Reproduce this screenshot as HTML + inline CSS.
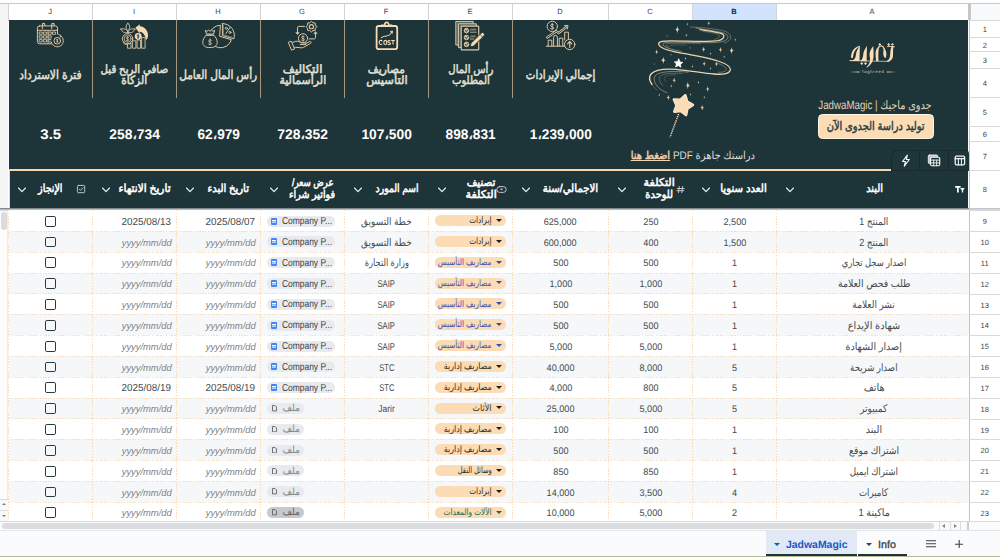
<!DOCTYPE html>
<html lang="ar">
<head>
<meta charset="utf-8">
<title>JadwaMagic</title>
<style>
*{box-sizing:border-box;margin:0;padding:0}
html,body{width:1000px;height:557px;overflow:hidden;background:#fff}
body{font-family:"Liberation Sans",sans-serif;color:#3c4043;position:relative;text-rendering:geometricPrecision}
#app{position:absolute;left:0;top:0;width:1000px;height:557px;overflow:hidden;background:#fff}
.abs{position:absolute}
.ch{position:absolute;top:3.5px;height:16.8px;background:#fff;border-left:1px solid #d4d4d4;font-size:7.5px;color:#444;text-align:center;line-height:15.6px}
.ch.sel{background:#d3e3fd;font-weight:bold;color:#0a2250}
.rh{position:absolute;left:968.5px;width:31.5px;background:#fff;border-top:1px solid #d9d9d9;border-left:1px solid #c4c4c4;font-size:7.5px;color:#444;text-align:center}
.rh span{position:absolute;left:0;right:0;top:50%;margin-top:-4px;line-height:9px}
#band{position:absolute;left:8.5px;top:20.2px;width:959.8px;height:187.5px;background:#1d3439}
.vdiv{position:absolute;top:20.2px;width:1px;height:77.4px;background:#a8977c}
.kl{position:absolute;top:55.3px;height:40px;display:flex;align-items:center;justify-content:center;text-align:center;direction:rtl;font-size:12.5px;line-height:11.6px;font-weight:normal;-webkit-text-stroke:.5px #e3e1d8;color:#e3e1d8;white-space:nowrap}
.kl.two{font-size:11.6px}
.kv{position:absolute;top:125px;height:18px;text-align:center;font-size:14px;line-height:18px;font-weight:bold;color:#fff;direction:ltr;unicode-bidi:bidi-override}
.hd{position:absolute;top:171px;height:37px;display:flex;align-items:center;justify-content:center;text-align:center;direction:rtl;font-size:11.2px;line-height:10.8px;font-weight:normal;-webkit-text-stroke:.55px #fff;color:#fff;white-space:nowrap}
.hd.two{font-size:10.8px;line-height:11.3px}
.chev{position:absolute;top:187.2px;width:8px;height:6px}
.cell{position:absolute;height:12px;line-height:12px;text-align:center;font-size:10.4px;color:#434a4e;white-space:nowrap;direction:rtl}
.cell.ltr{direction:ltr;font-size:9.5px}
.cell.lat{direction:ltr;font-size:9.8px}
.cell.dt{direction:ltr;text-align:right;padding-right:5.2px;font-size:10.2px}
.ph{font-style:italic;color:#7d8388;font-size:9.5px}
.rowbg{position:absolute;left:8.5px;width:960px}
.hl{position:absolute;left:8.5px;width:960px;height:1px;background:repeating-linear-gradient(90deg,#fbdcba 0 1.4px,transparent 1.4px 2.8px)}
.vl{position:absolute;top:210.3px;width:1px;height:311px;background:repeating-linear-gradient(180deg,#fbdcba 0 1.4px,transparent 1.4px 2.8px)}
.chip{position:absolute;height:11px;border-radius:5.5px;background:#fbdcb4;direction:rtl;font-size:9px;line-height:11px;white-space:nowrap;color:#2a2a2a;text-align:right;padding-right:14.6px}
.chip i{position:absolute;right:4.5px;top:3.8px;width:0;height:0;border-left:3.2px solid transparent;border-right:3.2px solid transparent;border-top:3.6px solid #1f1f1f}
.chip.b i{border-top-color:#2a4fc4}
.chip.g i{border-top-color:#1b6b53}
.chipt{position:absolute;height:12px;line-height:12px;direction:rtl;font-size:9px;white-space:nowrap;color:#2a2a2a;text-align:right;padding-right:14.6px}
.chipt.b{color:#3b4fb5}.chipt.g{color:#1b6b53}
.fc{position:absolute;height:11px;border-radius:5.5px;background:#e8eaed;font-size:10px;line-height:11px;white-space:nowrap;color:#3c4043;direction:ltr}
.fc b{position:absolute;left:4px;top:2px;width:6px;height:7px;background:#4285f4;border-radius:1px}
.fc b:before{content:"";position:absolute;left:1.3px;top:2px;width:3.4px;height:.8px;background:#fff;box-shadow:0 1.6px 0 #fff}
.fct{position:absolute;height:12px;line-height:12px;font-size:10px;white-space:nowrap;color:#3c4043;direction:ltr}
.ff{position:absolute;height:11px;border-radius:5.5px;background:#e8eaed;font-size:10px;line-height:11px;white-space:nowrap;color:#80868b;direction:rtl}
.ff.h{background:#c6c9cd;color:#5f6368}
.fft{position:absolute;height:12px;line-height:12px;font-size:10px;white-space:nowrap;color:#80868b;direction:rtl;text-align:right}
.fft.h{color:#5f6368}
.ff svg{position:absolute;left:5px;top:2.2px}
.cb{position:absolute;width:11.3px;height:10.8px;border:1.55px solid #243a3f;border-radius:1.8px;background:transparent}
</style>
</head>
<body>
<div id="app">
<div class="abs" style="left:0;top:0;width:1000px;height:3.2px;background:#fdfdfe"></div>
<div class="abs" style="left:0;top:3px;width:1000px;height:1px;background:#c9c9c9"></div>
<div class="abs" style="left:0;top:3.8px;width:8.3px;height:518px;background:linear-gradient(#f5f5f5 0,#f5f5f5 204px,#fdfdfd 207px)"></div>
<div class="abs" style="left:8px;top:3.8px;width:0.8px;height:17px;background:#bdbdbd"></div>
<div class="abs" style="left:7.4px;top:210.8px;width:.8px;height:288px;background:#ececec"></div>
<div class="ch" style="left:7.5px;width:84px">J</div>
<div class="ch" style="left:91.5px;width:84px">I</div>
<div class="ch" style="left:175.5px;width:84px">H</div>
<div class="ch" style="left:259.5px;width:84px">G</div>
<div class="ch" style="left:343.5px;width:84px">F</div>
<div class="ch" style="left:427.5px;width:84px">E</div>
<div class="ch" style="left:511.5px;width:96px">D</div>
<div class="ch" style="left:607.5px;width:84px">C</div>
<div class="ch sel" style="left:691.5px;width:84px">B</div>
<div class="ch" style="left:775.5px;width:192px">A</div>
<div class="abs" style="left:968.5px;top:3.8px;width:31.5px;height:16.5px;background:#f8f9fa"></div>
<div class="abs" style="left:968px;top:3.8px;width:3px;height:16.5px;background:#c6c6c6"></div>
<div class="rh" style="top:20.20px;height:16.70px"><span>1</span></div>
<div class="rh" style="top:36.90px;height:14.50px"><span>2</span></div>
<div class="rh" style="top:51.40px;height:16.70px"><span>3</span></div>
<div class="rh" style="top:68.10px;height:29.30px"><span>4</span></div>
<div class="rh" style="top:97.40px;height:28.10px"><span>5</span></div>
<div class="rh" style="top:125.50px;height:15.90px"><span>6</span></div>
<div class="rh" style="top:141.40px;height:28.70px"><span>7</span></div>
<div class="rh" style="top:170.10px;height:37.60px"><span>8</span></div>
<div class="rh" style="top:210.30px;height:20.83px"><span>9</span></div>
<div class="rh" style="top:231.13px;height:20.83px"><span>10</span></div>
<div class="rh" style="top:251.96px;height:20.83px"><span>11</span></div>
<div class="rh" style="top:272.79px;height:20.83px"><span>12</span></div>
<div class="rh" style="top:293.62px;height:20.83px"><span>13</span></div>
<div class="rh" style="top:314.45px;height:20.83px"><span>14</span></div>
<div class="rh" style="top:335.28px;height:20.83px"><span>15</span></div>
<div class="rh" style="top:356.11px;height:20.83px"><span>16</span></div>
<div class="rh" style="top:376.94px;height:20.83px"><span>17</span></div>
<div class="rh" style="top:397.77px;height:20.83px"><span>18</span></div>
<div class="rh" style="top:418.60px;height:20.83px"><span>19</span></div>
<div class="rh" style="top:439.43px;height:20.83px"><span>20</span></div>
<div class="rh" style="top:460.26px;height:20.83px"><span>21</span></div>
<div class="rh" style="top:481.09px;height:20.83px"><span>22</span></div>
<div class="rh" style="top:501.92px;height:20.83px"><span>23</span></div>
<div class="abs" style="left:968.5px;top:207.7px;width:31.5px;height:2.7px;background:linear-gradient(#bfc3c7,#d6d9dc)"></div>
<div id="band"></div>
<div class="vdiv" style="left:92.0px"></div>
<div class="vdiv" style="left:176.0px"></div>
<div class="vdiv" style="left:260.0px"></div>
<div class="vdiv" style="left:344.0px"></div>
<div class="vdiv" style="left:428.0px"></div>
<div class="vdiv" style="left:512.0px"></div>
<div class="kl" style="left:8.5px;width:84px"><div><div><span style="display:inline-block;transform:scaleX(0.854);">فترة الاسترداد</span></div></div></div>
<div class="kv" style="left:8.5px;width:84px"><span style="display:inline-block;transform:scaleX(1.074);unicode-bidi:bidi-override;direction:ltr;">3.5</span></div>
<div class="kl two" style="left:92.5px;width:84px"><div><div><span style="display:inline-block;transform:scaleX(0.881);">صافي الربح قبل</span></div><div><span style="display:inline-block;transform:scaleX(0.919);">الزكاة</span></div></div></div>
<div class="kv" style="left:92.5px;width:84px"><span style="display:inline-block;transform:scaleX(0.989);unicode-bidi:bidi-override;direction:ltr;">258<span style="font-weight:normal;-webkit-text-stroke:.4px #fff">،</span>734</span></div>
<div class="kl" style="left:176.5px;width:84px"><div><div><span style="display:inline-block;transform:scaleX(0.844);">رأس المال العامل</span></div></div></div>
<div class="kv" style="left:176.5px;width:84px"><span style="display:inline-block;transform:scaleX(0.978);unicode-bidi:bidi-override;direction:ltr;">62<span style="font-weight:normal;-webkit-text-stroke:.4px #fff">،</span>979</span></div>
<div class="kl two" style="left:260.5px;width:84px"><div><div><span style="display:inline-block;transform:scaleX(1.009);">التكاليف</span></div><div><span style="display:inline-block;transform:scaleX(0.944);">الرأسمالية</span></div></div></div>
<div class="kv" style="left:260.5px;width:84px"><span style="display:inline-block;transform:scaleX(0.989);unicode-bidi:bidi-override;direction:ltr;">728<span style="font-weight:normal;-webkit-text-stroke:.4px #fff">،</span>352</span></div>
<div class="kl two" style="left:344.5px;width:84px"><div><div><span style="display:inline-block;transform:scaleX(0.911);">مصاريف</span></div><div><span style="display:inline-block;transform:scaleX(0.991);">التأسيس</span></div></div></div>
<div class="kv" style="left:344.5px;width:84px"><span style="display:inline-block;transform:scaleX(0.985);unicode-bidi:bidi-override;direction:ltr;">107<span style="font-weight:normal;-webkit-text-stroke:.4px #fff">،</span>500</span></div>
<div class="kl two" style="left:428.5px;width:84px"><div><div><span style="display:inline-block;transform:scaleX(0.872);">رأس المال</span></div><div><span style="display:inline-block;transform:scaleX(0.865);">المطلوب</span></div></div></div>
<div class="kv" style="left:428.5px;width:84px"><span style="display:inline-block;transform:scaleX(0.976);unicode-bidi:bidi-override;direction:ltr;">898<span style="font-weight:normal;-webkit-text-stroke:.4px #fff">،</span>831</span></div>
<div class="kl" style="left:512.5px;width:96px"><div><div><span style="display:inline-block;transform:scaleX(0.816);">إجمالي الإيرادات</span></div></div></div>
<div class="kv" style="left:512.5px;width:96px"><span style="display:inline-block;transform:scaleX(0.975);unicode-bidi:bidi-override;direction:ltr;">1<span style="font-weight:normal;-webkit-text-stroke:.4px #fff">،</span>239<span style="font-weight:normal;-webkit-text-stroke:.4px #fff">،</span>000</span></div>
<svg class="abs" style="left:0;top:0" width="1000" height="220" viewBox="0 0 1000 220" fill="none" stroke-linecap="round" stroke-linejoin="round"><g stroke="#dcc8a6" stroke-width="1"><rect x="37.400" y="25.900" width="20.100" height="17.900" rx="2.200"/><path d="M37.600 30.300H57.300"/><path d="M42.300 28.400V24.600a1.250 1.250 0 0 1 2.500 0V25.400M51.700 28.400V24.600a1.250 1.250 0 0 1 2.500 0V25.400" stroke-width="1.050"/><rect x="39.5" y="32.0" width="2.700" height="2.300" stroke-width=".85"/><rect x="43.8" y="32.0" width="2.700" height="2.300" stroke-width=".85"/><rect x="48.6" y="32.0" width="2.700" height="2.300" stroke-width=".85"/><rect x="52.9" y="32.0" width="2.700" height="2.300" stroke-width=".85"/><rect x="39.5" y="35.8" width="2.700" height="2.300" stroke-width=".85"/><rect x="43.8" y="35.8" width="2.700" height="2.300" stroke-width=".85"/><rect x="48.6" y="35.8" width="2.700" height="2.300" stroke-width=".85"/><rect x="39.5" y="39.6" width="2.700" height="2.300" stroke-width=".85"/><rect x="43.8" y="39.6" width="2.700" height="2.300" stroke-width=".85"/><rect x="48.6" y="39.6" width="2.700" height="2.300" stroke-width=".85"/><path d="M47.900 31V43.400" stroke-width=".7"/><circle cx="57.300" cy="40.800" r="6.300" fill="#1d3439" stroke="none"/><circle cx="57.300" cy="40.800" r="3.300"/><path d="M57.300 39.300V42.300M56.500 39.900h1.300M56.800 41.800h1.300" stroke-width=".8"/><path d="M60.400 35.500A6.100 6.100 0 1 1 51.400 42.300" stroke-width=".95"/><path d="M58.700 34.600L60.700 35.400L60 37.300" stroke-width=".9"/></g><g stroke="#dcc8a6" stroke-width=".9"><path d="M127.900 23.300c2.500 2.300 2.500 5.100 0 7.200c-2.500-2.100-2.500-4.900 0-7.200Z"/><path d="M120.900 29.100c3.100-1 5.800.1 7 3.200c-3.100 1-5.800-.1-7-3.200Z"/><path d="M134.900 29.100c-3.100-1-5.800.1-7 3.200c3.100 1 5.800-.1 7-3.200Z"/><path d="M127.900 30.500V33.800"/><circle cx="127.600" cy="38.800" r="5.200"/><circle cx="127.600" cy="38.800" r="3.500" stroke-width=".8"/><path d="M128.700 37.500c-.9-.8-2.300-.4-2.300.5c0 1.300 2.400.6 2.400 1.900c0 .9-1.500 1.300-2.500.4M127.600 36.600v4.400" stroke-width=".7"/><path d="M123.600 41.800c-.8 1.500.8 2.700 4 2.700"/><path d="M127.400 47.800V43.600h3.600V47.800ZM132.400 47.800V40.800h3.500V47.800ZM137.100 47.800V40h3.500V47.800ZM141.600 47.800V37.600h3.500V47.800Z"/><circle cx="138.200" cy="36.300" r="3.400" fill="#f8dab5" stroke="none"/><path d="M139 35.200c-.7-.6-1.700-.3-1.700.4c0 1 1.800.5 1.800 1.500c0 .700-1.100 1-1.900.3M138.200 34.400v3.800" stroke="#1d3439" stroke-width=".7"/><path d="M135.400 27.800l4.300-3.600v2c4.800.3 8.300 4.300 8.300 9c0 2-.6 3.500-1.700 4.900c-1.100-4.600-3-8-6.600-8.700v2Z" fill="#f8dab5" stroke="none"/></g><g stroke="#dcc8a6" stroke-width="1"><path d="M220 25.200A11.300 11.300 0 1 0 231.400 39.700L220 36.400Z"/><path d="M222.400 23.600V35.600L233.900 38.800A11.800 11.800 0 0 0 222.400 23.600Z"/><path d="M223.500 25.200V34.800L232.400 37.300" stroke-width=".55" opacity=".8"/><path d="M226 33.400L230.200 27.200" stroke-width="1"/><circle cx="226.300" cy="28.300" r="1.050" stroke-width=".85"/><circle cx="230" cy="32.400" r="1.050" stroke-width=".85"/><path d="M206.400 35.200c-2.600 2.200-3.600 4.600-3.600 7.200c0 3.200 2.400 5.200 7.200 5.200s7.200-2 7.200-5.200c0-2.600-1-5-3.600-7.200Z" fill="#1d3439"/><path d="M206.200 33.600H213.800M206.200 35.200H213.800"/><path d="M206.400 33.400L205.300 30.400l1.800.9l1.400-1.200l1.500 1.200l1.500-1.200l1.400 1.200l1.800-.9L213.600 33.400" fill="#1d3439"/><path d="M211.500 40.300c-.9-.9-2.900-.6-2.900.7c0 1.600 3 .8 3 2.400c0 1.300-2.100 1.600-3.100.6M210 38.800v6.200" stroke-width=".8"/></g><g stroke="#dcc8a6" stroke-width="1"><path d="M316.70 26.70L315.28 28.31L315.15 30.45L313.01 30.58L311.40 32.00L309.79 30.58L307.65 30.45L307.52 28.31L306.10 26.70L307.52 25.09L307.65 22.95L309.79 22.82L311.40 21.40L313.01 22.82L315.15 22.95L315.28 25.09Z" stroke-linejoin="round" stroke-width="1"/><circle cx="311.400" cy="26.700" r="2.100" stroke-width="1.100"/><path d="M304.400 26.400H298.800a1.300 1.300 0 0 0-1.300 1.300V33"/><path d="M296 32.800L297.500 34.600L299 32.800Z" fill="#dcc8a6" stroke-width=".6"/><path d="M309.200 38.900H314.200a1.300 1.300 0 0 0 1.300-1.300V33.200"/><path d="M314 33.400L315.500 31.600L317 33.400Z" fill="#dcc8a6" stroke-width=".6"/><circle cx="303" cy="38.300" r="4.600"/><path d="M304.300 36.900c-.9-.9-2.700-.5-2.700.6c0 1.500 2.800.8 2.800 2.300c0 1.100-1.800 1.400-2.900.4M303 35.700v5.200" stroke-width=".85"/><path d="M288.600 42.200L291.300 41.200L294.600 49L291.900 50Z"/><path d="M292.600 42.600c2-1.400 4.400-1.800 6.600-.8l2.400 1h3.600c1.400 0 1.400 1.800 0 1.800h-5"/><path d="M305.600 43.600L309.600 41.600c1.200-.6 2.200.8 1.100 1.700L303.400 47.400c-.8.400-1.600.5-2.500.4L295.400 47.200l-1 .5"/></g><g stroke="#f8dab5"><rect x="376.600" y="26" width="20.600" height="23.200" rx="2.200" stroke-width="1.800"/><path d="M381.600 25.300h3c.3-3.800 3.900-3.800 4.200 0h3" stroke-width="1.700"/><circle cx="386.700" cy="24.200" r=".8" fill="#1d3439" stroke="none"/><path d="M381.200 37.800L384.200 36.200L386 36.400L387.600 35.400L389.200 35.400L392.200 31.600" stroke-width="1"/><path d="M390.400 31.400L392.600 31L392.400 33.200Z" fill="#f8dab5" stroke-width=".6"/></g><g stroke="#f8dab5" stroke-width="1.100" stroke-linecap="butt"><path d="M382.200 41.200a1.700 2.100 0 1 0 0 2.500"/><ellipse cx="385.300" cy="42.450" rx="1.500" ry="2.050"/><path d="M390.300 41.100c-.6-.8-2.500-.8-2.500.4c0 1.300 2.700.7 2.700 2.100c0 1.200-2.100 1.300-2.900.4"/><path d="M391.200 40.500h3.600M393 40.500v4.100"/></g><g stroke="#dcc8a6" stroke-width="1"><path d="M456.200 21.400H473.200V45H456.200Z" fill="#5d6a62"/><path d="M458.800 23.800H476.300V47.600H458.800Z" fill="#4f5d58"/><rect x="461.200" y="26.200" width="17.500" height="23.600" rx=".6" fill="#1d3439" stroke-width="1.200"/><circle cx="466.500" cy="30.6" r="2.300" stroke-width=".9" fill="#cdb999"/><path d="M465.400 30.70l.9.900l1.600-1.900" stroke="#1d3439" stroke-width=".9"/><circle cx="466.500" cy="37.5" r="2.300" stroke-width=".9" fill="#cdb999"/><path d="M465.400 37.60l.9.900l1.600-1.900" stroke="#1d3439" stroke-width=".9"/><circle cx="466.500" cy="44.4" r="2.300" stroke-width=".9" fill="#cdb999"/><path d="M465.400 44.50l.9.900l1.600-1.900" stroke="#1d3439" stroke-width=".9"/><path d="M470.400 29.600H476.200" stroke="#7b8174" stroke-width="1.800" stroke-linecap="butt"/><path d="M470.400 32.200H476.200" stroke-width=".8"/><path d="M470.400 36.400H475.600" stroke="#7b8174" stroke-width="1.800" stroke-linecap="butt"/><path d="M470.400 39H474" stroke-width=".8"/></g><path d="M470.300 46.600L471 43.200L481.200 33.200a1.900 1.900 0 0 1 2.700 2.700L473.700 45.900Z" fill="#f8dab5" stroke="#1d3439" stroke-width=".9"/><path d="M480 34.400L482.700 37.100" stroke="#1d3439" stroke-width=".7"/><g stroke="#dcc8a6" stroke-width="1"><circle cx="552.300" cy="26.400" r="5.200"/><path d="M553.700 24.800c-1-1-3.100-.6-3.100.7c0 1.700 3.200.9 3.200 2.500c0 1.300-2.200 1.700-3.300.6M552.200 23.300v6.200" stroke-width=".9"/><path d="M547.200 37.400L556.200 31.300L558.600 33L566.400 27" stroke-width="2.400"/><path d="M547.200 37.400L556.200 31.300L558.600 33L566.400 27" stroke="#1d3439" stroke-width=".9"/><path d="M564.400 25.600L568 25.400L567.400 29" stroke-width=".9"/><path d="M546.200 46.200H564.600"/><path d="M548.200 46V40.200H551.800V46M553.600 46V37.300a1.900 1.900 0 0 1 3.800 0V46M559.200 46V38.200H562.800V46M564.700 40V32.200H568.400V39.400"/><circle cx="569.700" cy="44.500" r="5.200" fill="#1d3439"/><path d="M569.700 47.600V42M567.600 43.800L569.700 41.400L571.800 43.800" stroke-width="1.100"/></g></svg>
<svg class="abs" style="left:630px;top:20px" width="120" height="125" viewBox="630 20 120 125" fill="none" stroke-linecap="round" stroke-linejoin="round"><path d="M700 29.600C708 30.800 716 31.600 721.500 33.600C725.500 35.200 724.500 39.200 718 40.600C708 42.200 690 41 672 40.800C664 40.700 658.600 41.400 658.600 43.600C658.600 47.600 668 50.800 680 52.800C694 55.100 708 57.600 718 61C726 63.800 730.600 66.600 730.400 69.400C730.100 73.600 724 74.800 714 74C702 73 690 70.400 676 69.300C664 68.500 654.500 69.800 651 74C648.400 77.400 649.500 81 652 84.500" stroke="#ecd2ab" stroke-width="1.300"/><path d="M696 28C706 30 718 31 724.500 33.400C730 35.600 729 40 722 41.600C712 43.600 694 42.300 676 42.100C668 42 662.800 42.400 662.800 44.200C662.800 46.800 670 49.400 681 51.400" stroke="#ecd2ab" stroke-width=".6" opacity=".85"/><path d="M690.500 27C704 27.600 722 29.200 727.500 32.400C733 35.600 731.500 41 724.500 43" stroke="#ecd2ab" stroke-width=".5" opacity=".7"/><path d="M703 31.400C711 32.400 716.500 33.400 718.600 35C720.500 36.600 719 38.600 714.500 39.400" stroke="#ecd2ab" stroke-width=".5" opacity=".6"/><path d="M700 43.400C688 43.200 674 43 667.500 43.800C664.500 44.400 665.500 46 669 47" stroke="#ecd2ab" stroke-width=".5" opacity=".6"/><path d="M686 45C679 44.800 672.500 45 670.500 45.600" stroke="#ecd2ab" stroke-width=".4" opacity=".5"/><path d="M716 62.600C722.500 65 726.400 67.400 726.200 69.600C726 71.600 723 72.400 718.500 72.200" stroke="#ecd2ab" stroke-width=".5" opacity=".7"/><path d="M688 72.200C676 71 662 71 656.500 74.600C652.500 77.400 654 82 657.500 86.500C660 89.500 663.500 91.600 667 92.600" stroke="#ecd2ab" stroke-width=".6" opacity=".8"/><path d="M682 73.400C672 72.800 663.500 73.400 660.500 76C658 78.400 659.500 82 662.500 85.500" stroke="#ecd2ab" stroke-width=".5" opacity=".6"/><path d="M676 74.800C669.500 74.600 665.500 75.600 664.500 77.400C663.800 79 664.800 80.600 666 82" stroke="#ecd2ab" stroke-width=".4" opacity=".5"/><path d="M650.200 76.500C649.600 81 652 86 657 90" stroke="#ecd2ab" stroke-width=".4" opacity=".6"/><path d="M677.30 25.80Q677.60 29.30 679.58 29.60Q677.60 29.90 677.30 33.40Q677.00 29.90 675.02 29.60Q677.00 29.30 677.30 25.80Z" fill="#e9cfa8" opacity="1.00"/><path d="M687.30 22.40Q687.44 23.96 688.32 24.10Q687.44 24.24 687.30 25.80Q687.16 24.24 686.28 24.10Q687.16 23.96 687.30 22.40Z" fill="#e9cfa8" opacity="0.80"/><path d="M708.80 21.10Q708.98 23.12 710.12 23.30Q708.98 23.48 708.80 25.50Q708.62 23.48 707.48 23.30Q708.62 23.12 708.80 21.10Z" fill="#e9cfa8" opacity="0.80"/><path d="M686.40 33.40Q686.54 35.06 687.48 35.20Q686.54 35.34 686.40 37.00Q686.26 35.34 685.32 35.20Q686.26 35.06 686.40 33.40Z" fill="#e9cfa8" opacity="0.80"/><path d="M667.10 34.90Q667.20 36.00 667.82 36.10Q667.20 36.20 667.10 37.30Q667.00 36.20 666.38 36.10Q667.00 36.00 667.10 34.90Z" fill="#e9cfa8" opacity="0.70"/><path d="M735.30 38.10Q735.44 39.66 736.32 39.80Q735.44 39.94 735.30 41.50Q735.16 39.94 734.28 39.80Q735.16 39.66 735.30 38.10Z" fill="#e9cfa8" opacity="0.70"/><path d="M731.60 46.90Q731.90 50.30 733.82 50.60Q731.90 50.90 731.60 54.30Q731.30 50.90 729.38 50.60Q731.30 50.30 731.60 46.90Z" fill="#e9cfa8" opacity="1.00"/><path d="M720.50 47.00Q720.72 49.58 722.18 49.80Q720.72 50.02 720.50 52.60Q720.28 50.02 718.82 49.80Q720.28 49.58 720.50 47.00Z" fill="#e9cfa8" opacity="0.90"/><path d="M703.60 46.80Q703.81 49.19 705.16 49.40Q703.81 49.61 703.60 52.00Q703.39 49.61 702.04 49.40Q703.39 49.19 703.60 46.80Z" fill="#e9cfa8" opacity="0.90"/><path d="M690.00 46.80Q690.10 47.90 690.72 48.00Q690.10 48.10 690.00 49.20Q689.90 48.10 689.28 48.00Q689.90 47.90 690.00 46.80Z" fill="#e9cfa8" opacity="0.70"/><path d="M710.60 52.30Q710.72 53.68 711.50 53.80Q710.72 53.92 710.60 55.30Q710.48 53.92 709.70 53.80Q710.48 53.68 710.60 52.30Z" fill="#e9cfa8" opacity="0.80"/><path d="M724.20 55.30Q724.32 56.68 725.10 56.80Q724.32 56.92 724.20 58.30Q724.08 56.92 723.30 56.80Q724.08 56.68 724.20 55.30Z" fill="#e9cfa8" opacity="0.70"/><path d="M656.70 49.60Q656.90 51.90 658.20 52.10Q656.90 52.30 656.70 54.60Q656.50 52.30 655.20 52.10Q656.50 51.90 656.70 49.60Z" fill="#e9cfa8" opacity="0.90"/><path d="M671.00 53.60Q671.10 54.70 671.72 54.80Q671.10 54.90 671.00 56.00Q670.90 54.90 670.28 54.80Q670.90 54.70 671.00 53.60Z" fill="#e9cfa8" opacity="0.70"/><path d="M663.30 56.60Q663.60 60.00 665.52 60.30Q663.60 60.60 663.30 64.00Q663.00 60.60 661.08 60.30Q663.00 60.00 663.30 56.60Z" fill="#e9cfa8" opacity="1.00"/><path d="M654.20 62.90Q654.30 64.00 654.92 64.10Q654.30 64.20 654.20 65.30Q654.10 64.20 653.48 64.10Q654.10 64.00 654.20 62.90Z" fill="#e9cfa8" opacity="0.70"/><path d="M685.50 56.70Q685.64 58.36 686.58 58.50Q685.64 58.64 685.50 60.30Q685.36 58.64 684.42 58.50Q685.36 58.36 685.50 56.70Z" fill="#e9cfa8" opacity="0.80"/><path d="M704.20 61.30Q704.40 63.60 705.70 63.80Q704.40 64.00 704.20 66.30Q704.00 64.00 702.70 63.80Q704.00 63.60 704.20 61.30Z" fill="#e9cfa8" opacity="0.90"/><path d="M716.40 61.60Q716.60 63.90 717.90 64.10Q716.60 64.30 716.40 66.60Q716.20 64.30 714.90 64.10Q716.20 63.90 716.40 61.60Z" fill="#e9cfa8" opacity="0.90"/><path d="M692.50 64.80Q692.63 66.27 693.46 66.40Q692.63 66.53 692.50 68.00Q692.37 66.53 691.54 66.40Q692.37 66.27 692.50 64.80Z" fill="#e9cfa8" opacity="0.80"/><path d="M710.60 66.90Q710.72 68.28 711.50 68.40Q710.72 68.52 710.60 69.90Q710.48 68.52 709.70 68.40Q710.48 68.28 710.60 66.90Z" fill="#e9cfa8" opacity="0.80"/><path d="M674.20 77.50Q674.42 79.98 675.82 80.20Q674.42 80.42 674.20 82.90Q673.98 80.42 672.58 80.20Q673.98 79.98 674.20 77.50Z" fill="#e9cfa8" opacity="0.90"/><path d="M687.80 81.70Q688.10 85.20 690.08 85.50Q688.10 85.80 687.80 89.30Q687.50 85.80 685.52 85.50Q687.50 85.20 687.80 81.70Z" fill="#e9cfa8" opacity="1.00"/><path d="M698.50 80.70Q698.64 82.26 699.52 82.40Q698.64 82.54 698.50 84.10Q698.36 82.54 697.48 82.40Q698.36 82.26 698.50 80.70Z" fill="#e9cfa8" opacity="0.80"/><path d="M671.20 84.20Q671.34 85.76 672.22 85.90Q671.34 86.04 671.20 87.60Q671.06 86.04 670.18 85.90Q671.06 85.76 671.20 84.20Z" fill="#e9cfa8" opacity="0.80"/><path d="M707.70 86.30Q707.92 88.88 709.38 89.10Q707.92 89.32 707.70 91.90Q707.48 89.32 706.02 89.10Q707.48 88.88 707.70 86.30Z" fill="#e9cfa8" opacity="0.90"/><path d="M690.50 93.00Q690.62 94.38 691.40 94.50Q690.62 94.62 690.50 96.00Q690.38 94.62 689.60 94.50Q690.38 94.38 690.50 93.00Z" fill="#e9cfa8" opacity="0.80"/><path d="M704.30 95.80Q704.42 97.18 705.20 97.30Q704.42 97.42 704.30 98.80Q704.18 97.42 703.40 97.30Q704.18 97.18 704.30 95.80Z" fill="#e9cfa8" opacity="0.80"/><path d="M659.20 93.30Q659.33 94.77 660.16 94.90Q659.33 95.03 659.20 96.50Q659.07 95.03 658.24 94.90Q659.07 94.77 659.20 93.30Z" fill="#e9cfa8" opacity="0.80"/><path d="M668.30 94.80Q668.52 97.38 669.98 97.60Q668.52 97.82 668.30 100.40Q668.08 97.82 666.62 97.60Q668.08 97.38 668.30 94.80Z" fill="#e9cfa8" opacity="0.90"/><path d="M702.20 104.80Q702.43 107.47 703.94 107.70Q702.43 107.93 702.20 110.60Q701.97 107.93 700.46 107.70Q701.97 107.47 702.20 104.80Z" fill="#e9cfa8" opacity="0.95"/><path d="M678.81 59.11L679.85 61.89L682.77 62.44L680.45 64.29L680.83 67.23L678.35 65.59L675.67 66.87L676.46 64.01L674.42 61.85L677.39 61.72Z" fill="#fff" stroke="#fff" stroke-width=".8"/><path d="M678.600 114L670 137.300" stroke="#f6dcb8" stroke-width="1.500" stroke-dasharray="1.300 .9" stroke-linecap="butt"/><path d="M685.37 95.30L687.15 101.67L692.89 104.94L687.39 108.60L686.06 115.07L680.87 110.97L674.30 111.70L676.60 105.51L673.88 99.48L680.48 99.76Z" fill="#fbdcb4" stroke="#fdeed8" stroke-width="2.600"/><path d="M685.37 95.30L687.15 101.67L692.89 104.94L687.39 108.60L686.06 115.07L680.87 110.97L674.30 111.70L676.60 105.51L673.88 99.48L680.48 99.76Z" fill="#fbdcb4" stroke="#fbdcb4" stroke-width="1"/></svg>
<svg class="abs" style="left:840px;top:38px" width="70" height="42" viewBox="840 38 70 42" fill="none" stroke-linecap="round" stroke-linejoin="round"><g fill="#fbdcb4" stroke="none"><path d="M859.700 45.700C856 46.500 852.900 49 851.700 53C851.100 55.200 851 56.800 851.100 57.700C851.700 58.200 852.400 58.200 852.900 57.800C853.200 54.800 854 51.600 855.800 49.500C857 48.100 858.300 47.200 859.500 46.700Z"/><path d="M859.900 45.500C858.700 47.600 856.500 50.600 856 54C855.700 56.600 855.300 59.100 852.800 60.300L849.800 60.300L849.700 60.900L859.600 61.100C859.500 56 859.800 50 859.900 45.500Z"/><path d="M867 45.700C865.700 47.800 863.700 50.600 863.300 54C863 56.600 862.700 59.300 860.600 60.600L860.600 61.100L866.700 61.200C866.600 56 866.900 50 867 45.700Z"/><path d="M873.200 45.900C871.700 48 869.900 50.600 869.600 53.600C869.400 56 870.100 57.600 870.100 59.400C870.100 62 869.100 64.400 866.600 67.100L866.900 67.700C870.600 65.500 873.100 61.600 873.500 57.600C873.800 54 873.500 50 873.200 45.900Z"/><path d="M879.200 46.300C877.100 47.700 875.500 50.200 875.500 53C875.500 55.600 875.800 58.200 876.100 61L878.500 61.200C878.200 57 878.300 52 878.800 48.200Z"/><path d="M883.400 47.600C883.900 50 883.200 52 883.300 54C883.500 56 884.300 57.600 885.500 58.300C886.700 56.400 886.600 53 885.700 50.600C885.200 49.300 884.400 48.300 883.400 47.600Z"/><path d="M891.600 46.600C890.700 48.800 890.300 51.400 890.200 54C890.100 57 889.500 59.700 886.800 61L886.900 61.700C890.700 61.400 892.800 59.400 893 56C893.100 52.800 893.100 49.600 893.100 46.700Z"/><path d="M879.70 42.95L881.15 44.40L879.70 45.85L878.25 44.40Z"/><path d="M888.70 43.05L890.15 44.50L888.70 45.95L887.25 44.50Z"/><path d="M892.40 42.95L893.85 44.40L892.40 45.85L890.95 44.40Z"/><path d="M861.70 62.05L863.15 63.50L861.70 64.95L860.25 63.50Z"/><path d="M865.50 62.05L866.95 63.50L865.50 64.95L864.05 63.50Z"/></g><g stroke="#fbdcb4" fill="none"><path d="M878.800 47.200C880 45.300 882.800 45.300 884 48.400" stroke-width="1.300"/><path d="M887.500 46.500H894" stroke-width=".9"/><path d="M894 46.500L893.800 47.800" stroke-width=".6"/><path d="M850 60.700L889 61.400" stroke-width=".7"/></g><path d="M849.300 72L859.600 71.550L859.600 72.450Z" fill="#fbdcb4"/><path d="M896.400 72L886.800 71.550L886.800 72.450Z" fill="#fbdcb4"/></svg>
<div class="abs" style="left:858px;top:69.2px;width:30px;height:6px;text-align:center;font-size:4.2px;line-height:6px;letter-spacing:.72px;color:#d9c3a3;white-space:nowrap">Taghreed</div>
<div class="abs" style="left:612px;top:149.2px;width:161.5px;height:14px;text-align:center;direction:rtl;font-size:11px;line-height:14px;color:#dedede;white-space:nowrap"><span style="display:inline-block;transform:scaleX(0.903);">دراستك جاهزة PDF <u style="color:#f3d5ae;-webkit-text-stroke:.45px #f3d5ae">اضغط هنا</u></span></div>
<div class="abs" style="left:794.5px;top:97.3px;width:160px;height:16px;text-align:center;direction:rtl;font-size:12px;line-height:16px;color:#e6d2b6;white-space:nowrap"><span style="display:inline-block;transform:scaleX(0.809);">جدوى ماجيك | JadwaMagic</span></div>
<div class="abs" style="left:818.3px;top:114.3px;width:115.7px;height:24.7px;border-radius:4.5px;background:#fbdcb4;border:1px solid #fff3e2;direction:rtl;font-size:12px;line-height:22.5px;font-weight:normal;-webkit-text-stroke:.45px #2b3b3e;color:#2b3b3e;white-space:nowrap;display:flex;justify-content:center;align-items:center"><span style="display:inline-block;transform:scaleX(0.821);">توليد دراسة الجدوى الآن</span></div>
<div class="abs" style="left:8.5px;top:169.4px;width:882.7px;height:1.5px;background:#f5d6ad"></div>
<div class="abs" style="left:8.5px;top:169.4px;width:1.2px;height:38.6px;background:#f0d2aa"></div>
<div class="abs" style="left:891px;top:150.3px;width:77.5px;height:19.7px;border-top:1px solid #172a2e;border-left:1px solid #172a2e;border-top-left-radius:6.5px;border-top-right-radius:4px;background:#1e3539"></div>
<div class="abs" style="left:919.2px;top:151px;width:1px;height:19px;background:#172a2e"></div>
<div class="abs" style="left:948.2px;top:151px;width:1px;height:19px;background:#172a2e"></div>
<div class="abs" style="left:891.5px;top:170px;width:77px;height:1px;background:#172a2e"></div>
<svg class="abs" style="left:880px;top:146px" width="100" height="60" viewBox="880 146 100 60" fill="none" stroke-linecap="round" stroke-linejoin="round"><path d="M907.300 155.200L902.500 161.500H905.500L904.300 166.100L909.300 159.500H906.300Z" stroke="#f4f6f7" stroke-width="1.150"/><rect x="928.300" y="155" width="9.300" height="8.600" rx="1.200" fill="#b9c1c4" stroke="#f4f6f7" stroke-width=".9"/><rect x="930.600" y="157.300" width="9.100" height="8.400" rx="1.100" fill="#1d3439" stroke="#f4f6f7" stroke-width="1.100"/><path d="M930.600 160.100H939.700M930.600 162.900H939.700M933.650 160.100V165.700M936.650 160.100V165.700" stroke="#f4f6f7" stroke-width=".9"/><path d="M930.600 158.700H939.700" stroke="#f4f6f7" stroke-width=".9" opacity=".0"/><rect x="955.200" y="156.100" width="9.400" height="8.800" rx="1.300" stroke="#f4f6f7" stroke-width="1.250"/><path d="M955.200 158.700H964.600" stroke="#f4f6f7" stroke-width="1.250"/><path d="M958.350 158.700V164.900M961.450 158.700V164.900" stroke="#f4f6f7" stroke-width="1.050"/></svg>
<div class="hd" style="left:10.799999999999997px;width:80px"><div><div><span style="display:inline-block;transform:scaleX(0.852);">الإنجاز</span></div></div></div>
<svg class="chev" style="left:17.5px" viewBox="0 0 8 6"><path d="M0.5 1 L4 4.6 L7.5 1" fill="none" stroke="#f1f3f4" stroke-width="1.1" stroke-linecap="round" stroke-linejoin="round"/></svg>
<div class="hd" style="left:104.6px;width:80px"><div><div><span style="display:inline-block;transform:scaleX(0.942);">تاريخ الانتهاء</span></div></div></div>
<svg class="chev" style="left:101.5px" viewBox="0 0 8 6"><path d="M0.5 1 L4 4.6 L7.5 1" fill="none" stroke="#f1f3f4" stroke-width="1.1" stroke-linecap="round" stroke-linejoin="round"/></svg>
<div class="hd" style="left:188.3px;width:80px"><div><div><span style="display:inline-block;transform:scaleX(0.894);">تاريخ البدء</span></div></div></div>
<svg class="chev" style="left:185.5px" viewBox="0 0 8 6"><path d="M0.5 1 L4 4.6 L7.5 1" fill="none" stroke="#f1f3f4" stroke-width="1.1" stroke-linecap="round" stroke-linejoin="round"/></svg>
<div class="hd two" style="left:272.5px;width:80px"><div><div><span style="display:inline-block;transform:scaleX(0.803);">عرض سعر/</span></div><div><span style="display:inline-block;transform:scaleX(0.884);">فواتير شراء</span></div></div></div>
<svg class="chev" style="left:269.5px" viewBox="0 0 8 6"><path d="M0.5 1 L4 4.6 L7.5 1" fill="none" stroke="#f1f3f4" stroke-width="1.1" stroke-linecap="round" stroke-linejoin="round"/></svg>
<div class="hd" style="left:357.5px;width:80px"><div><div><span style="display:inline-block;transform:scaleX(0.824);">اسم المورد</span></div></div></div>
<svg class="chev" style="left:353.5px" viewBox="0 0 8 6"><path d="M0.5 1 L4 4.6 L7.5 1" fill="none" stroke="#f1f3f4" stroke-width="1.1" stroke-linecap="round" stroke-linejoin="round"/></svg>
<div class="hd two" style="left:440.8px;width:80px"><div><div><span style="display:inline-block;transform:scaleX(0.951);">تصنيف</span></div><div><span style="display:inline-block;transform:scaleX(1.032);">التكلفة</span></div></div></div>
<svg class="chev" style="left:437.5px" viewBox="0 0 8 6"><path d="M0.5 1 L4 4.6 L7.5 1" fill="none" stroke="#f1f3f4" stroke-width="1.1" stroke-linecap="round" stroke-linejoin="round"/></svg>
<div class="hd" style="left:530.3px;width:80px"><div><div><span style="display:inline-block;transform:scaleX(0.910);">الاجمالي/سنة</span></div></div></div>
<svg class="chev" style="left:521.5px" viewBox="0 0 8 6"><path d="M0.5 1 L4 4.6 L7.5 1" fill="none" stroke="#f1f3f4" stroke-width="1.1" stroke-linecap="round" stroke-linejoin="round"/></svg>
<div class="hd two" style="left:619.6px;width:80px"><div><div><span style="display:inline-block;transform:scaleX(1.025);">التكلفة</span></div><div><span style="display:inline-block;transform:scaleX(0.913);">للوحدة</span></div></div></div>
<svg class="chev" style="left:617.5px" viewBox="0 0 8 6"><path d="M0.5 1 L4 4.6 L7.5 1" fill="none" stroke="#f1f3f4" stroke-width="1.1" stroke-linecap="round" stroke-linejoin="round"/></svg>
<div class="hd" style="left:703.7px;width:80px"><div><div><span style="display:inline-block;transform:scaleX(0.915);">العدد سنويا</span></div></div></div>
<svg class="chev" style="left:701.5px" viewBox="0 0 8 6"><path d="M0.5 1 L4 4.6 L7.5 1" fill="none" stroke="#f1f3f4" stroke-width="1.1" stroke-linecap="round" stroke-linejoin="round"/></svg>
<div class="hd" style="left:835px;width:80px"><div><div><span style="display:inline-block;transform:scaleX(0.877);">البند</span></div></div></div>
<svg class="chev" style="left:785.5px" viewBox="0 0 8 6"><path d="M0.5 1 L4 4.6 L7.5 1" fill="none" stroke="#f1f3f4" stroke-width="1.1" stroke-linecap="round" stroke-linejoin="round"/></svg>
<svg class="abs" style="left:0;top:172px" width="1000" height="36" viewBox="0 172 1000 36" fill="none" stroke-linecap="round" stroke-linejoin="round"><rect x="77.400" y="185.400" width="7.300" height="7.300" rx="1" stroke="#cfd5d7" stroke-width=".9"/><path d="M79.200 189.100L80.500 190.400L83 187.700" stroke="#cfd5d7" stroke-width=".9"/><rect x="496.800" y="186.600" width="9.400" height="5.800" rx="2.900" stroke="#cfd5d7" stroke-width=".9"/><path d="M500.500 189L501.500 190.200L502.500 189Z" fill="#cfd5d7" stroke="#cfd5d7" stroke-width=".4"/><path d="M679.300 186.500L678.500 192.700M682.600 186.500L681.800 192.700M677.200 188.500H684.200M676.800 190.700H683.800" stroke="#cfd5d7" stroke-width=".9"/><path d="M955.200 186.800H960.600M957.900 186.800V192.600" stroke="#fff" stroke-width="1.700" stroke-linecap="butt"/><path d="M960.600 188.700H964.300M962.450 188.700V192.600" stroke="#fff" stroke-width="1.350" stroke-linecap="butt"/></svg>
<div class="abs" style="left:0;top:207.6px;width:968.5px;height:3.2px;background:linear-gradient(#5d6b70,#a9aeb2 35%,#cfd2d5 75%,#eceef0)"></div>
<div class="rowbg" style="top:210.30px;height:20.83px;background:#ffffff"></div>
<div class="rowbg" style="top:231.13px;height:20.83px;background:#f5f7f9"></div>
<div class="rowbg" style="top:251.96px;height:20.83px;background:#ffffff"></div>
<div class="rowbg" style="top:272.79px;height:20.83px;background:#f5f7f9"></div>
<div class="rowbg" style="top:293.62px;height:20.83px;background:#ffffff"></div>
<div class="rowbg" style="top:314.45px;height:20.83px;background:#f5f7f9"></div>
<div class="rowbg" style="top:335.28px;height:20.83px;background:#ffffff"></div>
<div class="rowbg" style="top:356.11px;height:20.83px;background:#f5f7f9"></div>
<div class="rowbg" style="top:376.94px;height:20.83px;background:#ffffff"></div>
<div class="rowbg" style="top:397.77px;height:20.83px;background:#f5f7f9"></div>
<div class="rowbg" style="top:418.60px;height:20.83px;background:#ffffff"></div>
<div class="rowbg" style="top:439.43px;height:20.83px;background:#f5f7f9"></div>
<div class="rowbg" style="top:460.26px;height:20.83px;background:#ffffff"></div>
<div class="rowbg" style="top:481.09px;height:20.83px;background:#f5f7f9"></div>
<div class="rowbg" style="top:501.92px;height:20.83px;background:#ffffff"></div>
<div class="hl" style="top:230.98px"></div>
<div class="hl" style="top:251.81px"></div>
<div class="hl" style="top:272.64px"></div>
<div class="hl" style="top:293.47px"></div>
<div class="hl" style="top:314.30px"></div>
<div class="hl" style="top:335.13px"></div>
<div class="hl" style="top:355.96px"></div>
<div class="hl" style="top:376.79px"></div>
<div class="hl" style="top:397.62px"></div>
<div class="hl" style="top:418.45px"></div>
<div class="hl" style="top:439.28px"></div>
<div class="hl" style="top:460.11px"></div>
<div class="hl" style="top:480.94px"></div>
<div class="hl" style="top:501.77px"></div>
<div class="vl" style="left:8.0px"></div>
<div class="vl" style="left:92.0px"></div>
<div class="vl" style="left:176.0px"></div>
<div class="vl" style="left:260.0px"></div>
<div class="vl" style="left:344.0px"></div>
<div class="vl" style="left:428.0px"></div>
<div class="vl" style="left:512.0px"></div>
<div class="vl" style="left:608.0px"></div>
<div class="vl" style="left:692.0px"></div>
<div class="vl" style="left:776.0px"></div>
<div class="cell " style="left:777.8px;top:217px;width:192px"><span style="display:inline-block;transform:scaleX(0.860);">المنتج 1</span></div>
<div class="cell ltr" style="left:692.5px;top:217px;width:84px"><span style="display:inline-block;transform:scaleX(0.959);">2,500</span></div>
<div class="cell ltr" style="left:608.5px;top:217px;width:84px"><span style="display:inline-block;transform:scaleX(0.955);">250</span></div>
<div class="cell ltr" style="left:512.5px;top:217px;width:96px"><span style="display:inline-block;transform:scaleX(0.958);">625,000</span></div>
<div class="chip " style="left:435.3px;top:215.16px;width:70.8px"><i></i></div>
<div class="chipt " style="left:435.3px;top:214px;width:70.8px"><span style="display:inline-block;transform:scaleX(0.812);transform-origin:100% 50%;">إيرادات</span></div>
<div class="cell " style="left:344.5px;top:217px;width:84px"><span style="display:inline-block;transform:scaleX(0.861);">خطة التسويق</span></div>
<div class="fc" style="left:267px;top:215.52px;width:68.4px"><b></b></div>
<div class="fct" style="left:281.9px;top:216px"><span style="display:inline-block;transform:scaleX(0.843);transform-origin:0 50%;">Company P...</span></div>
<div class="cell dt" style="left:176.5px;top:217px;width:84px"><span style="display:inline-block;transform:scaleX(0.969);transform-origin:100% 50%;">2025/08/07</span></div>
<div class="cell dt" style="left:92.5px;top:217px;width:84px"><span style="display:inline-block;transform:scaleX(0.969);transform-origin:100% 50%;">2025/08/13</span></div>
<div class="cb" style="left:44.9px;top:215.81px"></div>
<div class="cell " style="left:777.8px;top:238px;width:192px"><span style="display:inline-block;transform:scaleX(0.860);">المنتج 2</span></div>
<div class="cell ltr" style="left:692.5px;top:238px;width:84px"><span style="display:inline-block;transform:scaleX(0.959);">1,500</span></div>
<div class="cell ltr" style="left:608.5px;top:238px;width:84px"><span style="display:inline-block;transform:scaleX(0.955);">400</span></div>
<div class="cell ltr" style="left:512.5px;top:238px;width:96px"><span style="display:inline-block;transform:scaleX(0.958);">600,000</span></div>
<div class="chip " style="left:435.3px;top:236.00px;width:70.8px"><i></i></div>
<div class="chipt " style="left:435.3px;top:235px;width:70.8px"><span style="display:inline-block;transform:scaleX(0.812);transform-origin:100% 50%;">إيرادات</span></div>
<div class="cell " style="left:344.5px;top:238px;width:84px"><span style="display:inline-block;transform:scaleX(0.861);">خطة التسويق</span></div>
<div class="fc" style="left:267px;top:236.35px;width:68.4px"><b></b></div>
<div class="fct" style="left:281.9px;top:237px"><span style="display:inline-block;transform:scaleX(0.843);transform-origin:0 50%;">Company P...</span></div>
<div class="cell dt" style="left:176.5px;top:238px;width:84px"><span style="display:inline-block;transform:scaleX(0.986);transform-origin:100% 50%;"><i class="ph">yyyy/mm/dd</i></span></div>
<div class="cell dt" style="left:92.5px;top:238px;width:84px"><span style="display:inline-block;transform:scaleX(0.986);transform-origin:100% 50%;"><i class="ph">yyyy/mm/dd</i></span></div>
<div class="cb" style="left:44.9px;top:236.65px"></div>
<div class="cell " style="left:777.8px;top:258px;width:192px"><span style="display:inline-block;transform:scaleX(0.806);">اصدار سجل تجاري</span></div>
<div class="cell ltr" style="left:692.5px;top:258px;width:84px"><span style="display:inline-block;transform:scaleX(0.953);">1</span></div>
<div class="cell ltr" style="left:608.5px;top:258px;width:84px"><span style="display:inline-block;transform:scaleX(0.955);">500</span></div>
<div class="cell ltr" style="left:512.5px;top:258px;width:96px"><span style="display:inline-block;transform:scaleX(0.955);">500</span></div>
<div class="chip b" style="left:435.3px;top:256.82px;width:70.8px"><i></i></div>
<div class="chipt b" style="left:435.3px;top:256px;width:70.8px"><span style="display:inline-block;transform:scaleX(0.809);transform-origin:100% 50%;">مصاريف التأسيس</span></div>
<div class="cell " style="left:344.5px;top:258px;width:84px"><span style="display:inline-block;transform:scaleX(0.792);">وزارة التجارة</span></div>
<div class="fc" style="left:267px;top:257.18px;width:68.4px"><b></b></div>
<div class="fct" style="left:281.9px;top:258px"><span style="display:inline-block;transform:scaleX(0.843);transform-origin:0 50%;">Company P...</span></div>
<div class="cell dt" style="left:176.5px;top:258px;width:84px"><span style="display:inline-block;transform:scaleX(0.986);transform-origin:100% 50%;"><i class="ph">yyyy/mm/dd</i></span></div>
<div class="cell dt" style="left:92.5px;top:258px;width:84px"><span style="display:inline-block;transform:scaleX(0.986);transform-origin:100% 50%;"><i class="ph">yyyy/mm/dd</i></span></div>
<div class="cb" style="left:44.9px;top:257.48px"></div>
<div class="cell " style="left:777.8px;top:279px;width:192px"><span style="display:inline-block;transform:scaleX(0.901);">طلب فحص العلامة</span></div>
<div class="cell ltr" style="left:692.5px;top:279px;width:84px"><span style="display:inline-block;transform:scaleX(0.953);">1</span></div>
<div class="cell ltr" style="left:608.5px;top:279px;width:84px"><span style="display:inline-block;transform:scaleX(0.959);">1,000</span></div>
<div class="cell ltr" style="left:512.5px;top:279px;width:96px"><span style="display:inline-block;transform:scaleX(0.959);">1,000</span></div>
<div class="chip b" style="left:435.3px;top:277.66px;width:70.8px"><i></i></div>
<div class="chipt b" style="left:435.3px;top:277px;width:70.8px"><span style="display:inline-block;transform:scaleX(0.809);transform-origin:100% 50%;">مصاريف التأسيس</span></div>
<div class="cell lat" style="left:344.5px;top:279px;width:84px"><span style="display:inline-block;transform:scaleX(0.784);">SAIP</span></div>
<div class="fc" style="left:267px;top:278.01px;width:68.4px"><b></b></div>
<div class="fct" style="left:281.9px;top:279px"><span style="display:inline-block;transform:scaleX(0.843);transform-origin:0 50%;">Company P...</span></div>
<div class="cell dt" style="left:176.5px;top:279px;width:84px"><span style="display:inline-block;transform:scaleX(0.986);transform-origin:100% 50%;"><i class="ph">yyyy/mm/dd</i></span></div>
<div class="cell dt" style="left:92.5px;top:279px;width:84px"><span style="display:inline-block;transform:scaleX(0.986);transform-origin:100% 50%;"><i class="ph">yyyy/mm/dd</i></span></div>
<div class="cb" style="left:44.9px;top:278.31px"></div>
<div class="cell " style="left:777.8px;top:300px;width:192px"><span style="display:inline-block;transform:scaleX(0.864);">نشر العلامة</span></div>
<div class="cell ltr" style="left:692.5px;top:300px;width:84px"><span style="display:inline-block;transform:scaleX(0.953);">1</span></div>
<div class="cell ltr" style="left:608.5px;top:300px;width:84px"><span style="display:inline-block;transform:scaleX(0.955);">500</span></div>
<div class="cell ltr" style="left:512.5px;top:300px;width:96px"><span style="display:inline-block;transform:scaleX(0.955);">500</span></div>
<div class="chip b" style="left:435.3px;top:298.48px;width:70.8px"><i></i></div>
<div class="chipt b" style="left:435.3px;top:298px;width:70.8px"><span style="display:inline-block;transform:scaleX(0.809);transform-origin:100% 50%;">مصاريف التأسيس</span></div>
<div class="cell lat" style="left:344.5px;top:300px;width:84px"><span style="display:inline-block;transform:scaleX(0.784);">SAIP</span></div>
<div class="fc" style="left:267px;top:298.83px;width:68.4px"><b></b></div>
<div class="fct" style="left:281.9px;top:299px"><span style="display:inline-block;transform:scaleX(0.843);transform-origin:0 50%;">Company P...</span></div>
<div class="cell dt" style="left:176.5px;top:300px;width:84px"><span style="display:inline-block;transform:scaleX(0.986);transform-origin:100% 50%;"><i class="ph">yyyy/mm/dd</i></span></div>
<div class="cell dt" style="left:92.5px;top:300px;width:84px"><span style="display:inline-block;transform:scaleX(0.986);transform-origin:100% 50%;"><i class="ph">yyyy/mm/dd</i></span></div>
<div class="cb" style="left:44.9px;top:299.13px"></div>
<div class="cell " style="left:777.8px;top:321px;width:192px"><span style="display:inline-block;transform:scaleX(0.940);">شهادة الإيداع</span></div>
<div class="cell ltr" style="left:692.5px;top:321px;width:84px"><span style="display:inline-block;transform:scaleX(0.953);">1</span></div>
<div class="cell ltr" style="left:608.5px;top:321px;width:84px"><span style="display:inline-block;transform:scaleX(0.955);">500</span></div>
<div class="cell ltr" style="left:512.5px;top:321px;width:96px"><span style="display:inline-block;transform:scaleX(0.955);">500</span></div>
<div class="chip b" style="left:435.3px;top:319.31px;width:70.8px"><i></i></div>
<div class="chipt b" style="left:435.3px;top:318px;width:70.8px"><span style="display:inline-block;transform:scaleX(0.809);transform-origin:100% 50%;">مصاريف التأسيس</span></div>
<div class="cell lat" style="left:344.5px;top:321px;width:84px"><span style="display:inline-block;transform:scaleX(0.784);">SAIP</span></div>
<div class="fc" style="left:267px;top:319.67px;width:68.4px"><b></b></div>
<div class="fct" style="left:281.9px;top:320px"><span style="display:inline-block;transform:scaleX(0.843);transform-origin:0 50%;">Company P...</span></div>
<div class="cell dt" style="left:176.5px;top:321px;width:84px"><span style="display:inline-block;transform:scaleX(0.986);transform-origin:100% 50%;"><i class="ph">yyyy/mm/dd</i></span></div>
<div class="cell dt" style="left:92.5px;top:321px;width:84px"><span style="display:inline-block;transform:scaleX(0.986);transform-origin:100% 50%;"><i class="ph">yyyy/mm/dd</i></span></div>
<div class="cb" style="left:44.9px;top:319.97px"></div>
<div class="cell " style="left:777.8px;top:342px;width:192px"><span style="display:inline-block;transform:scaleX(0.922);">إصدار الشهادة</span></div>
<div class="cell ltr" style="left:692.5px;top:342px;width:84px"><span style="display:inline-block;transform:scaleX(0.953);">1</span></div>
<div class="cell ltr" style="left:608.5px;top:342px;width:84px"><span style="display:inline-block;transform:scaleX(0.959);">5,000</span></div>
<div class="cell ltr" style="left:512.5px;top:342px;width:96px"><span style="display:inline-block;transform:scaleX(0.959);">5,000</span></div>
<div class="chip b" style="left:435.3px;top:340.14px;width:70.8px"><i></i></div>
<div class="chipt b" style="left:435.3px;top:339px;width:70.8px"><span style="display:inline-block;transform:scaleX(0.809);transform-origin:100% 50%;">مصاريف التأسيس</span></div>
<div class="cell lat" style="left:344.5px;top:342px;width:84px"><span style="display:inline-block;transform:scaleX(0.784);">SAIP</span></div>
<div class="fc" style="left:267px;top:340.50px;width:68.4px"><b></b></div>
<div class="fct" style="left:281.9px;top:341px"><span style="display:inline-block;transform:scaleX(0.843);transform-origin:0 50%;">Company P...</span></div>
<div class="cell dt" style="left:176.5px;top:342px;width:84px"><span style="display:inline-block;transform:scaleX(0.986);transform-origin:100% 50%;"><i class="ph">yyyy/mm/dd</i></span></div>
<div class="cell dt" style="left:92.5px;top:342px;width:84px"><span style="display:inline-block;transform:scaleX(0.986);transform-origin:100% 50%;"><i class="ph">yyyy/mm/dd</i></span></div>
<div class="cb" style="left:44.9px;top:340.80px"></div>
<div class="cell " style="left:777.8px;top:363px;width:192px"><span style="display:inline-block;transform:scaleX(0.825);">اصدار شريحة</span></div>
<div class="cell ltr" style="left:692.5px;top:363px;width:84px"><span style="display:inline-block;transform:scaleX(0.953);">5</span></div>
<div class="cell ltr" style="left:608.5px;top:363px;width:84px"><span style="display:inline-block;transform:scaleX(0.959);">8,000</span></div>
<div class="cell ltr" style="left:512.5px;top:363px;width:96px"><span style="display:inline-block;transform:scaleX(0.958);">40,000</span></div>
<div class="chip " style="left:435.3px;top:360.97px;width:70.8px"><i></i></div>
<div class="chipt " style="left:435.3px;top:360px;width:70.8px"><span style="display:inline-block;transform:scaleX(0.877);transform-origin:100% 50%;">مصاريف إدارية</span></div>
<div class="cell lat" style="left:344.5px;top:363px;width:84px"><span style="display:inline-block;transform:scaleX(0.765);">STC</span></div>
<div class="fc" style="left:267px;top:361.32px;width:68.4px"><b></b></div>
<div class="fct" style="left:281.9px;top:362px"><span style="display:inline-block;transform:scaleX(0.843);transform-origin:0 50%;">Company P...</span></div>
<div class="cell dt" style="left:176.5px;top:363px;width:84px"><span style="display:inline-block;transform:scaleX(0.986);transform-origin:100% 50%;"><i class="ph">yyyy/mm/dd</i></span></div>
<div class="cell dt" style="left:92.5px;top:363px;width:84px"><span style="display:inline-block;transform:scaleX(0.986);transform-origin:100% 50%;"><i class="ph">yyyy/mm/dd</i></span></div>
<div class="cb" style="left:44.9px;top:361.62px"></div>
<div class="cell " style="left:777.8px;top:383px;width:192px"><span style="display:inline-block;transform:scaleX(0.942);">هاتف</span></div>
<div class="cell ltr" style="left:692.5px;top:383px;width:84px"><span style="display:inline-block;transform:scaleX(0.953);">5</span></div>
<div class="cell ltr" style="left:608.5px;top:383px;width:84px"><span style="display:inline-block;transform:scaleX(0.955);">800</span></div>
<div class="cell ltr" style="left:512.5px;top:383px;width:96px"><span style="display:inline-block;transform:scaleX(0.959);">4,000</span></div>
<div class="chip " style="left:435.3px;top:381.81px;width:70.8px"><i></i></div>
<div class="chipt " style="left:435.3px;top:381px;width:70.8px"><span style="display:inline-block;transform:scaleX(0.877);transform-origin:100% 50%;">مصاريف إدارية</span></div>
<div class="cell lat" style="left:344.5px;top:383px;width:84px"><span style="display:inline-block;transform:scaleX(0.765);">STC</span></div>
<div class="fc" style="left:267px;top:382.16px;width:68.4px"><b></b></div>
<div class="fct" style="left:281.9px;top:383px"><span style="display:inline-block;transform:scaleX(0.843);transform-origin:0 50%;">Company P...</span></div>
<div class="cell dt" style="left:176.5px;top:383px;width:84px"><span style="display:inline-block;transform:scaleX(0.969);transform-origin:100% 50%;">2025/08/19</span></div>
<div class="cell dt" style="left:92.5px;top:383px;width:84px"><span style="display:inline-block;transform:scaleX(0.969);transform-origin:100% 50%;">2025/08/19</span></div>
<div class="cb" style="left:44.9px;top:382.46px"></div>
<div class="cell " style="left:777.8px;top:404px;width:192px"><span style="display:inline-block;transform:scaleX(0.874);">كمبيوتر</span></div>
<div class="cell ltr" style="left:692.5px;top:404px;width:84px"><span style="display:inline-block;transform:scaleX(0.953);">5</span></div>
<div class="cell ltr" style="left:608.5px;top:404px;width:84px"><span style="display:inline-block;transform:scaleX(0.959);">5,000</span></div>
<div class="cell ltr" style="left:512.5px;top:404px;width:96px"><span style="display:inline-block;transform:scaleX(0.958);">25,000</span></div>
<div class="chip " style="left:435.3px;top:402.63px;width:70.8px"><i></i></div>
<div class="chipt " style="left:435.3px;top:402px;width:70.8px"><span style="display:inline-block;transform:scaleX(0.880);transform-origin:100% 50%;">الأثاث</span></div>
<div class="cell lat" style="left:344.5px;top:404px;width:84px"><span style="display:inline-block;transform:scaleX(0.866);">Jarir</span></div>
<div class="ff " style="left:267px;top:402.99px;width:37px"><svg width="5" height="6.4" viewBox="0 0 5 6.4"><path d="M0.5 0.5 H3 L4.5 2 V5.9 H0.5 Z" fill="none" stroke="#5f6368" stroke-width="0.9"/></svg></div>
<div class="fft " style="left:270px;top:403px;width:30px"><span style="display:inline-block;transform:scaleX(0.920);transform-origin:100% 50%;">ملف</span></div>
<div class="cell dt" style="left:176.5px;top:404px;width:84px"><span style="display:inline-block;transform:scaleX(0.986);transform-origin:100% 50%;"><i class="ph">yyyy/mm/dd</i></span></div>
<div class="cell dt" style="left:92.5px;top:404px;width:84px"><span style="display:inline-block;transform:scaleX(0.986);transform-origin:100% 50%;"><i class="ph">yyyy/mm/dd</i></span></div>
<div class="cb" style="left:44.9px;top:403.29px"></div>
<div class="cell " style="left:777.8px;top:425px;width:192px"><span style="display:inline-block;transform:scaleX(0.922);">البند</span></div>
<div class="cell ltr" style="left:692.5px;top:425px;width:84px"><span style="display:inline-block;transform:scaleX(0.953);">1</span></div>
<div class="cell ltr" style="left:608.5px;top:425px;width:84px"><span style="display:inline-block;transform:scaleX(0.955);">100</span></div>
<div class="cell ltr" style="left:512.5px;top:425px;width:96px"><span style="display:inline-block;transform:scaleX(0.955);">100</span></div>
<div class="chip " style="left:435.3px;top:423.46px;width:70.8px"><i></i></div>
<div class="chipt " style="left:435.3px;top:423px;width:70.8px"><span style="display:inline-block;transform:scaleX(0.877);transform-origin:100% 50%;">مصاريف إدارية</span></div>
<div class="ff " style="left:267px;top:423.81px;width:37px"><svg width="5" height="6.4" viewBox="0 0 5 6.4"><path d="M0.5 0.5 H3 L4.5 2 V5.9 H0.5 Z" fill="none" stroke="#5f6368" stroke-width="0.9"/></svg></div>
<div class="fft " style="left:270px;top:424px;width:30px"><span style="display:inline-block;transform:scaleX(0.920);transform-origin:100% 50%;">ملف</span></div>
<div class="cell dt" style="left:176.5px;top:425px;width:84px"><span style="display:inline-block;transform:scaleX(0.986);transform-origin:100% 50%;"><i class="ph">yyyy/mm/dd</i></span></div>
<div class="cell dt" style="left:92.5px;top:425px;width:84px"><span style="display:inline-block;transform:scaleX(0.986);transform-origin:100% 50%;"><i class="ph">yyyy/mm/dd</i></span></div>
<div class="cb" style="left:44.9px;top:424.12px"></div>
<div class="cell " style="left:777.8px;top:446px;width:192px"><span style="display:inline-block;transform:scaleX(0.889);">اشتراك موقع</span></div>
<div class="cell ltr" style="left:692.5px;top:446px;width:84px"><span style="display:inline-block;transform:scaleX(0.953);">1</span></div>
<div class="cell ltr" style="left:608.5px;top:446px;width:84px"><span style="display:inline-block;transform:scaleX(0.955);">500</span></div>
<div class="cell ltr" style="left:512.5px;top:446px;width:96px"><span style="display:inline-block;transform:scaleX(0.955);">500</span></div>
<div class="chip " style="left:435.3px;top:444.30px;width:70.8px"><i></i></div>
<div class="chipt " style="left:435.3px;top:443px;width:70.8px"><span style="display:inline-block;transform:scaleX(0.877);transform-origin:100% 50%;">مصاريف إدارية</span></div>
<div class="ff " style="left:267px;top:444.65px;width:37px"><svg width="5" height="6.4" viewBox="0 0 5 6.4"><path d="M0.5 0.5 H3 L4.5 2 V5.9 H0.5 Z" fill="none" stroke="#5f6368" stroke-width="0.9"/></svg></div>
<div class="fft " style="left:270px;top:445px;width:30px"><span style="display:inline-block;transform:scaleX(0.920);transform-origin:100% 50%;">ملف</span></div>
<div class="cell dt" style="left:176.5px;top:446px;width:84px"><span style="display:inline-block;transform:scaleX(0.986);transform-origin:100% 50%;"><i class="ph">yyyy/mm/dd</i></span></div>
<div class="cell dt" style="left:92.5px;top:446px;width:84px"><span style="display:inline-block;transform:scaleX(0.986);transform-origin:100% 50%;"><i class="ph">yyyy/mm/dd</i></span></div>
<div class="cb" style="left:44.9px;top:444.95px"></div>
<div class="cell " style="left:777.8px;top:467px;width:192px"><span style="display:inline-block;transform:scaleX(0.839);">اشتراك ايميل</span></div>
<div class="cell ltr" style="left:692.5px;top:467px;width:84px"><span style="display:inline-block;transform:scaleX(0.953);">1</span></div>
<div class="cell ltr" style="left:608.5px;top:467px;width:84px"><span style="display:inline-block;transform:scaleX(0.955);">850</span></div>
<div class="cell ltr" style="left:512.5px;top:467px;width:96px"><span style="display:inline-block;transform:scaleX(0.955);">850</span></div>
<div class="chip " style="left:435.3px;top:465.12px;width:70.8px"><i></i></div>
<div class="chipt " style="left:435.3px;top:464px;width:70.8px"><span style="display:inline-block;transform:scaleX(0.743);transform-origin:100% 50%;">وسائل النقل</span></div>
<div class="ff " style="left:267px;top:465.47px;width:37px"><svg width="5" height="6.4" viewBox="0 0 5 6.4"><path d="M0.5 0.5 H3 L4.5 2 V5.9 H0.5 Z" fill="none" stroke="#5f6368" stroke-width="0.9"/></svg></div>
<div class="fft " style="left:270px;top:466px;width:30px"><span style="display:inline-block;transform:scaleX(0.920);transform-origin:100% 50%;">ملف</span></div>
<div class="cell dt" style="left:176.5px;top:467px;width:84px"><span style="display:inline-block;transform:scaleX(0.986);transform-origin:100% 50%;"><i class="ph">yyyy/mm/dd</i></span></div>
<div class="cell dt" style="left:92.5px;top:467px;width:84px"><span style="display:inline-block;transform:scaleX(0.986);transform-origin:100% 50%;"><i class="ph">yyyy/mm/dd</i></span></div>
<div class="cb" style="left:44.9px;top:465.77px"></div>
<div class="cell " style="left:777.8px;top:488px;width:192px"><span style="display:inline-block;transform:scaleX(0.829);">كاميرات</span></div>
<div class="cell ltr" style="left:692.5px;top:488px;width:84px"><span style="display:inline-block;transform:scaleX(0.953);">4</span></div>
<div class="cell ltr" style="left:608.5px;top:488px;width:84px"><span style="display:inline-block;transform:scaleX(0.959);">3,500</span></div>
<div class="cell ltr" style="left:512.5px;top:488px;width:96px"><span style="display:inline-block;transform:scaleX(0.958);">14,000</span></div>
<div class="chip " style="left:435.3px;top:485.95px;width:70.8px"><i></i></div>
<div class="chipt " style="left:435.3px;top:485px;width:70.8px"><span style="display:inline-block;transform:scaleX(0.812);transform-origin:100% 50%;">إيرادات</span></div>
<div class="ff " style="left:267px;top:486.31px;width:37px"><svg width="5" height="6.4" viewBox="0 0 5 6.4"><path d="M0.5 0.5 H3 L4.5 2 V5.9 H0.5 Z" fill="none" stroke="#5f6368" stroke-width="0.9"/></svg></div>
<div class="fft " style="left:270px;top:487px;width:30px"><span style="display:inline-block;transform:scaleX(0.920);transform-origin:100% 50%;">ملف</span></div>
<div class="cell dt" style="left:176.5px;top:488px;width:84px"><span style="display:inline-block;transform:scaleX(0.986);transform-origin:100% 50%;"><i class="ph">yyyy/mm/dd</i></span></div>
<div class="cell dt" style="left:92.5px;top:488px;width:84px"><span style="display:inline-block;transform:scaleX(0.986);transform-origin:100% 50%;"><i class="ph">yyyy/mm/dd</i></span></div>
<div class="cb" style="left:44.9px;top:486.61px"></div>
<div class="cell " style="left:777.8px;top:508px;width:192px"><span style="display:inline-block;transform:scaleX(0.918);">ماكينة 1</span></div>
<div class="cell ltr" style="left:692.5px;top:508px;width:84px"><span style="display:inline-block;transform:scaleX(0.953);">2</span></div>
<div class="cell ltr" style="left:608.5px;top:508px;width:84px"><span style="display:inline-block;transform:scaleX(0.959);">5,000</span></div>
<div class="cell ltr" style="left:512.5px;top:508px;width:96px"><span style="display:inline-block;transform:scaleX(0.958);">10,000</span></div>
<div class="chip g" style="left:435.3px;top:506.79px;width:70.8px"><i></i></div>
<div class="chipt g" style="left:435.3px;top:506px;width:70.8px"><span style="display:inline-block;transform:scaleX(0.819);transform-origin:100% 50%;">الآلات والمعدات</span></div>
<div class="ff h" style="left:267px;top:507.14px;width:37px"><svg width="5" height="6.4" viewBox="0 0 5 6.4"><path d="M0.5 0.5 H3 L4.5 2 V5.9 H0.5 Z" fill="none" stroke="#5f6368" stroke-width="0.9"/></svg></div>
<div class="fft h" style="left:270px;top:507px;width:30px"><span style="display:inline-block;transform:scaleX(0.920);transform-origin:100% 50%;">ملف</span></div>
<div class="cell dt" style="left:176.5px;top:508px;width:84px"><span style="display:inline-block;transform:scaleX(0.986);transform-origin:100% 50%;"><i class="ph">yyyy/mm/dd</i></span></div>
<div class="cell dt" style="left:92.5px;top:508px;width:84px"><span style="display:inline-block;transform:scaleX(0.986);transform-origin:100% 50%;"><i class="ph">yyyy/mm/dd</i></span></div>
<div class="cb" style="left:44.9px;top:507.44px"></div>
<div class="abs" style="left:1.2px;top:211.5px;width:6px;height:18px;border-radius:3px;background:#dadce0"></div>
<div class="abs" style="left:0;top:499px;width:8.3px;height:22.3px;background:#f8f9fa;border-top:1px solid #dcdcdc"></div>
<div class="abs" style="left:0;top:510px;width:8.3px;height:1px;background:#dcdcdc"></div>
<div class="abs" style="left:1.9px;top:503.3px;width:0;height:0;border-left:2.2px solid transparent;border-right:2.2px solid transparent;border-bottom:2.8px solid #7d8084"></div>
<div class="abs" style="left:1.9px;top:514.8px;width:0;height:0;border-left:2.2px solid transparent;border-right:2.2px solid transparent;border-top:2.8px solid #7d8084"></div>
<div class="abs" style="left:0;top:521.3px;width:1000px;height:9px;background:#fbfbfc;border-top:1px solid #d9d9d9"></div>
<div class="abs" style="left:1.8px;top:523.2px;width:932.7px;height:5.6px;border-radius:2.7px;background:#dadce0"></div>
<div class="abs" style="left:939px;top:522.3px;width:21.6px;height:8px;background:#f8f9fa;border-left:1px solid #dcdcdc;border-right:1px solid #dcdcdc"></div>
<div class="abs" style="left:949.6px;top:522.3px;width:1px;height:8px;background:#dcdcdc"></div>
<div class="abs" style="left:942.4px;top:523.7px;width:0;height:0;border-top:2.4px solid transparent;border-bottom:2.4px solid transparent;border-right:3px solid #80868b"></div>
<div class="abs" style="left:953.6px;top:523.7px;width:0;height:0;border-top:2.4px solid transparent;border-bottom:2.4px solid transparent;border-left:3px solid #80868b"></div>
<div class="abs" style="left:967px;top:521.8px;width:2px;height:8.5px;background:#c9ccd0"></div>
<div class="abs" style="left:0;top:530.3px;width:1000px;height:26.7px;background:#f9fbfd;border-top:1px solid #e3e5e8"></div>
<div class="abs" style="left:766.3px;top:530.8px;width:91.2px;height:23.5px;background:#e1e9f7"></div>
<div class="abs" style="left:766.3px;top:553.8px;width:91.2px;height:2px;background:#1e3438"></div>
<div class="abs" style="left:858.2px;top:553.8px;width:48.6px;height:2px;background:#1e3438"></div>
<div class="abs" style="left:773.6px;top:542.5px;width:0;height:0;border-left:3px solid transparent;border-right:3px solid transparent;border-top:3.3px solid #0b57d0"></div>
<div class="abs" style="left:785.7px;top:538px;width:66px;height:14px;font-size:10.6px;line-height:14px;font-weight:bold;color:#1558c8;white-space:nowrap"><span style="display:inline-block;transform:scaleX(0.985);transform-origin:0 50%;">JadwaMagic</span></div>
<div class="abs" style="left:866.1px;top:542.5px;width:0;height:0;border-left:3px solid transparent;border-right:3px solid transparent;border-top:3.3px solid #3c4043"></div>
<div class="abs" style="left:877.7px;top:538px;width:30px;height:14px;font-size:10.6px;line-height:14px;color:#3c4043;white-space:nowrap;-webkit-text-stroke:0.3px #3c4043"><span style="display:inline-block;transform:scaleX(1.019);transform-origin:0 50%;">Info</span></div>
<svg class="abs" style="left:925.6px;top:540.2px" width="10.4" height="7.4" viewBox="0 0 10.4 7.4"><path d="M0 0.7H10.4M0 3.7H10.4M0 6.7H10.4" stroke="#3c4043" stroke-width="1.1" fill="none"/></svg>
<svg class="abs" style="left:954.6px;top:539.8px" width="8.4" height="8.4" viewBox="0 0 8.4 8.4"><path d="M4.2 0V8.4M0 4.2H8.4" stroke="#3c4043" stroke-width="1.1" fill="none"/></svg>
<div class="abs" style="left:0;top:556px;width:1000px;height:1px;background:#b9bc93"></div>
</div>
</body>
</html>
